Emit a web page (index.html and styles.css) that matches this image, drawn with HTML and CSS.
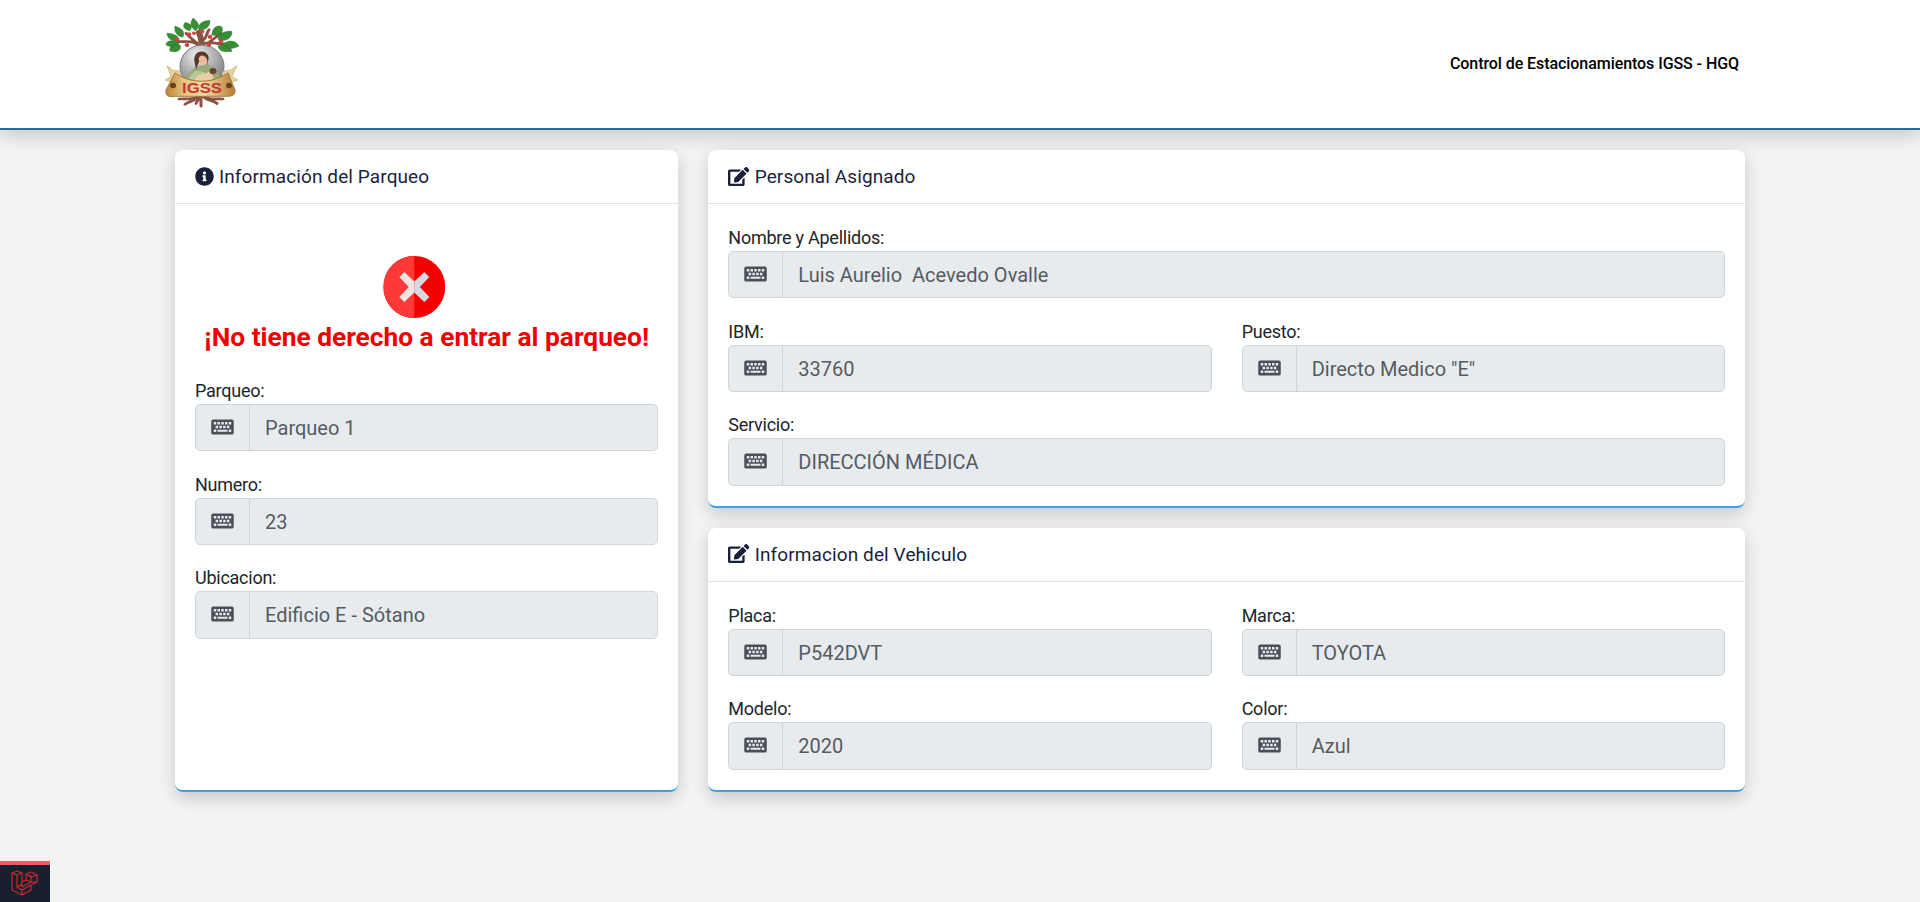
FILE: index.html
```html
<!DOCTYPE html>
<html lang="es">
<head>
<meta charset="utf-8">
<title>Control de Estacionamientos IGSS - HGQ</title>
<link rel="stylesheet" href="styles.css">
</head>
<body>
<svg class="defs" width="0" height="0" aria-hidden="true">
  <symbol id="keyboard" viewBox="0 0 576 512">
    <path fill-rule="evenodd" d="M48 64H528a48 48 0 0 1 48 48V400a48 48 0 0 1-48 48H48a48 48 0 0 1-48-48V112a48 48 0 0 1 48-48zM64 128v64h64v-64zM160 128v64h64v-64zM256 128v64h64v-64zM352 128v64h64v-64zM448 128v64h64v-64zM112 224v64h64v-64zM208 224v64h64v-64zM304 224v64h64v-64zM400 224v64h64v-64zM64 320v64h64v-64zM160 328v48h256v-48zM448 320v64h64v-64z"/>
  </symbol>
  <symbol id="info" viewBox="0 0 512 512">
    <path d="M256 8C119.043 8 8 119.083 8 256c0 136.997 111.043 248 248 248s248-111.003 248-248C504 119.083 392.957 8 256 8zm0 110c23.196 0 42 18.804 42 42s-18.804 42-42 42-42-18.804-42-42 18.804-42 42-42zm56 254c0 6.627-5.373 12-12 12h-88c-6.627 0-12-5.373-12-12v-24c0-6.627 5.373-12 12-12h12v-64h-12c-6.627 0-12-5.373-12-12v-24c0-6.627 5.373-12 12-12h64c6.627 0 12 5.373 12 12v100h12c6.627 0 12 5.373 12 12v24z"/>
  </symbol>
  <symbol id="edit" viewBox="0 0 576 512">
    <path d="M402.6 83.2l90.2 90.2c3.8 3.8 3.8 10 0 13.8L274.4 405.6l-92.8 10.3c-12.4 1.4-22.9-9.1-21.5-21.5l10.3-92.8L388.8 83.2c3.8-3.8 10-3.8 13.8 0zm162-22.9l-48.8-48.8c-15.2-15.2-39.9-15.2-55.2 0l-35.4 35.4c-3.8 3.8-3.8 10 0 13.8l90.2 90.2c3.8 3.8 10 3.8 13.8 0l35.4-35.4c15.2-15.3 15.2-40 0-55.2zM384 346.2V448H64V128h229.8c3.2 0 6.2-1.3 8.5-3.5l40-40c7.6-7.6 2.2-20.5-8.5-20.5H48C21.5 64 0 85.5 0 112v352c0 26.5 21.5 48 48 48h352c26.5 0 48-21.5 48-48V306.2c0-10.7-12.9-16-20.5-8.5l-40 40c-2.2 2.3-3.5 5.3-3.5 8.5z"/>
  </symbol>
</svg>

<header class="topbar">
  <div class="topbar-inner">
    <svg class="logo" viewBox="3 1 74 100" preserveAspectRatio="none">
      <defs>
        <radialGradient id="orb" cx=".4" cy=".25" r=".8">
          <stop offset="0" stop-color="#f4f4f4"/><stop offset=".4" stop-color="#b9babb"/><stop offset="1" stop-color="#77797a"/>
        </radialGradient>
        <linearGradient id="scroll" x1="0" x2="1">
          <stop offset="0" stop-color="#b98238"/><stop offset=".25" stop-color="#e7c37d"/><stop offset=".55" stop-color="#f2dba4"/><stop offset="1" stop-color="#b67c33"/>
        </linearGradient>
      </defs>
      <g fill="none" stroke="#8a5242" stroke-linecap="round">
        <path stroke-width="6" d="M39 33C40 26 39 22 37 17"/>
        <path stroke-width="3" d="M36 31C30 25 23 28 15 27M40 31C47 25 56 31 66 30M40 27C46 22 44 18 47 14M35 29C29 23 27 22 24 18M48 27C53 23 56 21 59 18"/>
        <path stroke-width="3" d="M39 84v15M36 88C31 93 26 90 17 91M35 89C32 94 27 93 23 97M42 88C48 93 54 90 61 91M42 89C46 93 51 92 55 96M37 90L34 96"/>
      </g>
      <ellipse cx="40" cy="55" rx="22" ry="24" fill="url(#orb)" stroke="#737576"/>
      <path fill="#98aa7b" d="M24 74C25 62 31 57 35 55L45 52C54 56 59 63 58 74Z"/>
      <path fill="#b8c794" d="M27 69C31 58 36 58 43 62L51 71Z"/>
      <path fill="#5a382b" d="M33 52C30 41 37 36 43 39C49 43 46 49 45 53L41 47L37 50L34 58Z"/>
      <ellipse cx="41" cy="48" rx="4" ry="5.500" fill="#e6bd9a" transform="rotate(-25 41 48)"/>
      <path fill="#ebcda8" d="M32 71C36 61 43 65 48 60L52 67L44 75Z"/>
      <circle cx="51" cy="60" r="3.500" fill="#694533"/>
      <path fill="#e5d0a0" stroke="#c1a36b" stroke-width=".6" d="M5 54L11 59L18 60L21 76L3 70L9 66ZM75 54L68 59L61 60L58 76L76 70L70 66Z"/>
      <path fill="url(#scroll)" stroke="#a87535" d="M13 62L19 66C31 73 48 73 60 66L66 62L73 81C74 87 69 88 65 88H13C7 89 3 88 4 81Z"/>
      <circle cx="11" cy="76" r="3" fill="#68401d"/><circle cx="67" cy="76" r="3" fill="#68401d"/>
      <text class="logo-text" x="20" y="84.500" textLength="40" lengthAdjust="spacingAndGlyphs">IGSS</text>
      <g fill="#378e35" stroke="#21722b" stroke-width=".5">
        <path d="M21 22C14 22 12 15 13 10C20 13 23 16 21 22Z"/>
        <path d="M34 15C28 12 28 6 31 1C37 6 38 10 34 15ZM37 14C35 8 42 3 48 4C48 11 43 15 37 14ZM28 15C22 14 20 10 23 6C29 7 31 10 28 15ZM50 20C50 12 55 8 60 11C62 17 57 22 50 20ZM56 25C57 17 65 15 70 16C70 24 63 28 56 25ZM17 29C9 24 4 27 4 31C10 34 15 34 17 29ZM18 31C10 29 7 33 8 38C16 40 20 36 18 31ZM61 30C68 24 74 27 77 32C70 36 65 36 61 30ZM56 32C61 30 69 33 70 38C62 39 57 38 56 32ZM16 27C8 27 5 22 5 18C13 18 18 22 16 27Z"/>
      </g>
      <g fill="#c94743"><circle cx="27" cy="19" r="2.300"/><circle cx="15" cy="25" r="2.300"/><circle cx="25" cy="31" r="2.300"/><circle cx="40" cy="16" r="2.300"/><circle cx="48" cy="22" r="2.300"/><circle cx="59" cy="27" r="2.300"/><circle cx="47" cy="31" r="2.300"/><circle cx="32" cy="18" r="2"/></g>
    </svg>
    <span class="topbar-title">Control de Estacionamientos IGSS - HGQ</span>
  </div>
</header>

<main class="container">
  <section class="card card-left">
    <h2 class="card-header"><svg class="icon-info"><use href="#info"/></svg>Información del Parqueo</h2>
    <div class="card-body">
      <div class="alert">
        <svg class="alert-icon" viewBox="0 0 62 62">
          <circle cx="31" cy="31" r="31" fill="#f50000"/>
          <path fill="#ff3838" d="M31 0A31 31 0 0 0 31 62Z"/>
          <path fill="#d8d8df" d="M31 25.500L41 16L46 21L36.500 31L46 41L41 46L31 36.500Z"/>
          <path fill="#f0e5e1" d="M31 25.500L21 16L16 21L25.500 31L16 41L21 46L31 36.500Z"/>
        </svg>
        <p class="alert-text">¡No tiene derecho a entrar al parqueo!</p>
      </div>
      <div class="fields fields-single">
        <div class="field"><label>Parqueo:</label><div class="group"><span class="addon"><svg><use href="#keyboard"/></svg></span><span class="value">Parqueo 1</span></div></div>
        <div class="field"><label>Numero:</label><div class="group"><span class="addon"><svg><use href="#keyboard"/></svg></span><span class="value">23</span></div></div>
        <div class="field"><label>Ubicacion:</label><div class="group"><span class="addon"><svg><use href="#keyboard"/></svg></span><span class="value">Edificio E - Sótano</span></div></div>
      </div>
    </div>
  </section>

  <div class="column">
    <section class="card">
      <h2 class="card-header"><svg class="icon-edit"><use href="#edit"/></svg>Personal Asignado</h2>
      <div class="card-body fields">
        <div class="field wide"><label>Nombre y Apellidos:</label><div class="group"><span class="addon"><svg><use href="#keyboard"/></svg></span><span class="value">Luis Aurelio  Acevedo Ovalle</span></div></div>
        <div class="field"><label>IBM:</label><div class="group"><span class="addon"><svg><use href="#keyboard"/></svg></span><span class="value">33760</span></div></div>
        <div class="field"><label>Puesto:</label><div class="group"><span class="addon"><svg><use href="#keyboard"/></svg></span><span class="value">Directo Medico "E"</span></div></div>
        <div class="field wide"><label>Servicio:</label><div class="group"><span class="addon"><svg><use href="#keyboard"/></svg></span><span class="value">DIRECCIÓN MÉDICA</span></div></div>
      </div>
    </section>
    <section class="card">
      <h2 class="card-header"><svg class="icon-edit"><use href="#edit"/></svg>Informacion del Vehiculo</h2>
      <div class="card-body fields">
        <div class="field"><label>Placa:</label><div class="group"><span class="addon"><svg><use href="#keyboard"/></svg></span><span class="value">P542DVT</span></div></div>
        <div class="field"><label>Marca:</label><div class="group"><span class="addon"><svg><use href="#keyboard"/></svg></span><span class="value">TOYOTA</span></div></div>
        <div class="field"><label>Modelo:</label><div class="group"><span class="addon"><svg><use href="#keyboard"/></svg></span><span class="value">2020</span></div></div>
        <div class="field"><label>Color:</label><div class="group"><span class="addon"><svg><use href="#keyboard"/></svg></span><span class="value">Azul</span></div></div>
      </div>
    </section>
  </div>
</main>

<div class="debugbar">
  <svg viewBox="0 0 27 27" width="27" height="27">
    <path d="M1 3L6 1L11 3V17L20 12V6L15 4L20 2L26 5V12L20 15V20L11 25L1 20V3L6 5L11 3M6 5V17L11 20L20 15M6 17L11 14M11 20V25M15 4L20 7L26 5M20 7V12L26 12M15 4V10L20 12M15 10L11 12"/>
  </svg>
</div>
</body>
</html>
```

FILE: styles.css
```css
* {
  box-sizing: border-box;
}

body {
  margin: 0;
  height: 902px;
  overflow: hidden;
  background: #f3f3f3;
  color: #212529;
  font-family: Roboto, sans-serif;
  font-size: 18px;
}

.defs {
  display: block;
}

.topbar {
  position: relative;
  z-index: 1;
  height: 130px;
  background: #fff;
  border-bottom: 2px solid #2f6b91;
  box-shadow: 0 8px 16px rgba(0, 0, 0, 0.11), 0 2px 20px rgba(0, 0, 0, 0.07);
}

.topbar-inner {
  display: flex;
  justify-content: space-between;
  align-items: center;
  width: 1600px;
  height: 126px;
  margin: 0 auto;
  padding: 0 21px 0 5px;
}

.logo {
  width: 74px;
  height: 90px;
  overflow: visible;
}

.logo-text {
  font: bold 16px "Liberation Sans", sans-serif;
  fill: #bd3b32;
}

.topbar-title {
  color: #000;
  font-size: 16px;
  font-weight: 500;
  letter-spacing: -0.065px;
}

.container {
  display: flex;
  gap: 30px;
  width: 1570px;
  height: 642px;
  margin: 20px auto 0;
}

.card {
  background: #fff;
  border-bottom: 2px solid #3aa3ea;
  border-radius: 8px;
  box-shadow: 0 8px 16px rgba(0, 0, 0, 0.11), 0 2px 20px rgba(0, 0, 0, 0.07);
}

.card-left {
  width: 503.33px;
}

.column {
  display: flex;
  flex: 1;
  flex-direction: column;
  gap: 20px;
}

.card-header {
  display: flex;
  align-items: center;
  gap: 5px;
  height: 54px;
  margin: 0;
  padding: 0 20px;
  border-bottom: 1px solid #e2e3e5;
  color: #1a1f3c;
  font-size: 19px;
  font-weight: 400;
  letter-spacing: 0.1px;
}

.card-header svg {
  height: 19px;
  margin-bottom: 1px;
  fill: #1a1f3c;
}

.icon-info {
  width: 19px;
}

.icon-edit {
  width: 21.4px;
}

.card-body {
  padding: 20px;
}

.alert {
  height: 153px;
  padding-top: 32px;
  text-align: center;
}

.alert-icon {
  display: block;
  width: 62px;
  height: 62px;
  margin: 0 auto;
  transform: translateX(-12.7px);
}

.alert-text {
  margin: 3px -10px 0;
  color: #f00000;
  font-size: 26.3px;
  font-weight: 700;
  line-height: 33px;
  white-space: nowrap;
}

.fields {
  display: grid;
  grid-template-columns: 1fr 1fr;
  gap: 19.2px 30px;
}

.fields-single {
  grid-template-columns: 1fr;
}

.wide {
  grid-column: 1 / -1;
}

.field label {
  display: block;
  height: 27px;
  line-height: 27px;
  letter-spacing: -0.25px;
}

.group {
  display: flex;
  height: 47.4px;
  overflow: hidden;
  border: 1px solid #ced4da;
  border-radius: 5px;
  background: #e8ebee;
}

.addon {
  display: flex;
  flex: none;
  align-items: center;
  justify-content: center;
  width: 54px;
  border-right: 1px solid #ced4da;
}

.addon svg {
  width: 23px;
  height: 20px;
  margin-bottom: 1px;
  fill: #495057;
}

.value {
  padding-left: 15px;
  color: #555b61;
  font-size: 20px;
  line-height: 46px;
  white-space: pre;
}

.debugbar {
  position: fixed;
  bottom: 0;
  left: 0;
  width: 50px;
  height: 41px;
  padding: 5px 11px;
  border-top: 4px solid #ea5f66;
  background: #18202f;
}

.debugbar svg {
  fill: none;
  stroke: #c72b2b;
  stroke-width: 1.2;
  stroke-linejoin: round;
}
```
